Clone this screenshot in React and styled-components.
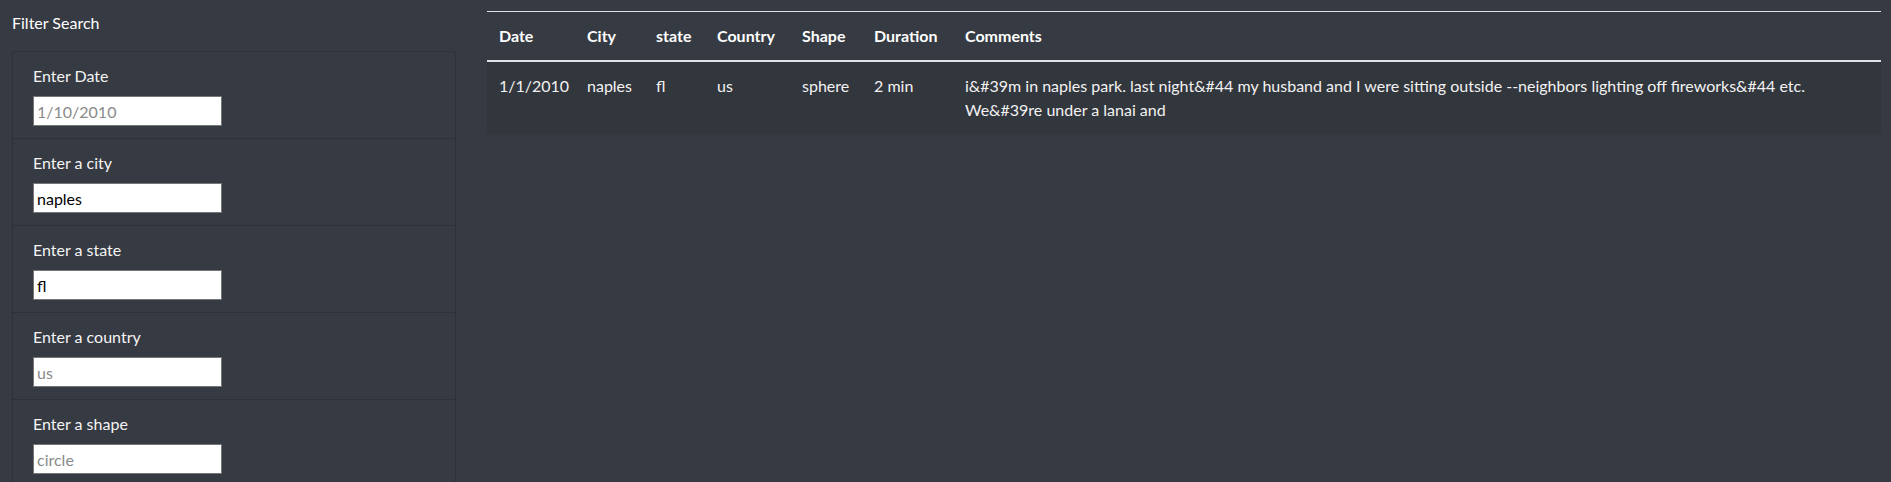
import React from 'react'
import styled, { createGlobalStyle } from 'styled-components'

const GlobalStyle = createGlobalStyle`
  body {
    margin: 0;
    background-color: #363a42;
    color: #ffffff;
    font-family: Lato, "Open Sans", sans-serif;
    font-size: 16px;
    line-height: 1.5;
  }
`

const fields = [
  { label: 'Enter Date', value: '', placeholder: '1/10/2010' },
  { label: 'Enter a city', value: 'naples', placeholder: '' },
  { label: 'Enter a state', value: 'fl', placeholder: '' },
  { label: 'Enter a country', value: '', placeholder: 'us' },
  { label: 'Enter a shape', value: '', placeholder: 'circle' },
]

const columns = [
  { title: 'Date', width: 88 },
  { title: 'City', width: 69 },
  { title: 'state', width: 61 },
  { title: 'Country', width: 85 },
  { title: 'Shape', width: 72 },
  { title: 'Duration', width: 91 },
  { title: 'Comments' },
]

const rows = [
  [
    '1/1/2010',
    'naples',
    'fl',
    'us',
    'sphere',
    '2 min',
    'i&#39m in naples park. last night&#44 my husband and I were sitting outside --neighbors lighting off fireworks&#44 etc. We&#39re under a lanai and',
  ],
]

function App() {
  return (
    <>
      <GlobalStyle />
      <Page>
        <Sidebar>
          <Title>Filter Search</Title>
          <FilterList>
            {fields.map((f) => (
              <FilterItem key={f.label}>
                <Label>{f.label}</Label>
                <Input defaultValue={f.value} placeholder={f.placeholder} />
              </FilterItem>
            ))}
          </FilterList>
        </Sidebar>
        <Main>
          <Table>
            <colgroup>
              {columns.map((c) => (
                <col key={c.title} style={c.width ? { width: c.width } : undefined} />
              ))}
            </colgroup>
            <thead>
              <tr>
                {columns.map((c) => (
                  <Th key={c.title}>{c.title}</Th>
                ))}
              </tr>
            </thead>
            <tbody>
              {rows.map((r, i) => (
                <Row key={i}>
                  {r.map((cell, j) => (
                    <Td key={j}>{cell}</Td>
                  ))}
                </Row>
              ))}
            </tbody>
          </Table>
        </Main>
      </Page>
    </>
  )
}

export default App

const Page = styled.div`
  display: grid;
  grid-template-columns: 444px 1fr;
  column-gap: 31px;
  padding: 0 10px 0 12px;
`

const Sidebar = styled.aside`
  display: flex;
  flex-direction: column;
`

const Title = styled.div`
  padding-top: 11px;
  margin-bottom: 16px;
  font-size: 16px;
`

const FilterList = styled.ul`
  list-style: none;
  margin: 0;
  padding: 0;
  border: 1px solid #2d3138;
  border-radius: 3px;
`

const FilterItem = styled.li`
  display: flex;
  flex-direction: column;
  align-items: flex-start;
  padding: 12px 20px 12px 20px;
  border-bottom: 1px solid #2d3138;
  &:last-child {
    border-bottom: none;
  }
`

const Label = styled.label`
  margin-bottom: 8px;
  color: #f4f4f4;
`

const Input = styled.input`
  box-sizing: border-box;
  width: 189px;
  height: 30px;
  padding: 1px 3px;
  border: 1px solid #767676;
  background: #ffffff;
  color: #000000;
  font-family: Lato, "Open Sans", sans-serif;
  font-size: 16px;
  &::placeholder {
    color: #8a8a8a;
  }
`

const Main = styled.main`
  padding-top: 11px;
`

const Table = styled.table`
  width: 100%;
  border-collapse: collapse;
  table-layout: fixed;
  border-top: 1px solid #dee2e6;
`

const Th = styled.th`
  text-align: left;
  padding: 12px;
  font-weight: 700;
  border-bottom: 2px solid #dee2e6;
`

const Row = styled.tr`
  background-color: #32363d;
`

const Td = styled.td`
  padding: 12px;
  vertical-align: top;
  color: #f2f2f2;
`
